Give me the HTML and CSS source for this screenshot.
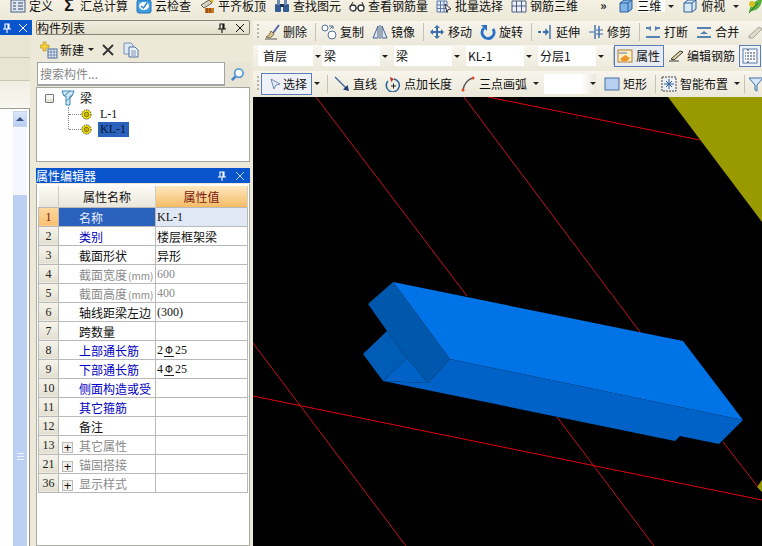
FILE: index.html
```html
<!DOCTYPE html>
<html lang="zh-CN">
<head>
<meta charset="utf-8">
<title>构件列表</title>
<link rel="stylesheet" href="styles.css">
</head>
<body>
<svg class="defs" width="0" height="0">
  <symbol id="i-define" viewBox="0 0 16 16"><rect x="1" y="2" width="14" height="12" fill="#dfe7f2" stroke="#4d5f7d"/><path d="M3 5h3M3 8h3M3 11h3M8 5h5M8 8h5M8 11h5" stroke="#33415c"/></symbol>
  <symbol id="i-check" viewBox="0 0 16 16"><rect x="1" y="2" width="14" height="13" rx="2" fill="#3f9ee0" stroke="#2370b4"/><ellipse cx="8" cy="8" rx="5" ry="4" fill="#fff"/><path d="M5 8l2.500 2L11 5" stroke="#2d86cc" stroke-width="1.500" fill="none"/></symbol>
  <symbol id="i-level" viewBox="0 0 16 16"><path d="M2 7l8-5 3 3-8 5z" fill="#d8d4c4" stroke="#66624f"/><rect x="6" y="10" width="9" height="5" fill="#c9781e"/><path d="M8 10v5M11 10v5" stroke="#7c2c10"/><path d="M12 2l2 2" stroke="#e2b100" stroke-width="2"/></symbol>
  <symbol id="i-find" viewBox="0 0 16 16"><rect x="1" y="6" width="6" height="8" rx="1" fill="#345b92"/><rect x="9" y="6" width="6" height="8" rx="1" fill="#345b92"/><rect x="3" y="2" width="3" height="5" fill="#6b8ab5"/><rect x="10" y="2" width="3" height="5" fill="#6b8ab5"/><rect x="6" y="6" width="4" height="3" fill="#1f3558"/></symbol>
  <symbol id="i-glasses" viewBox="0 0 16 16"><circle cx="4" cy="10" r="3" fill="#fff" stroke="#333" stroke-width="1.300"/><circle cx="12" cy="10" r="3" fill="#fff" stroke="#333" stroke-width="1.300"/><path d="M7 10h2M1 9l3-5M15 9l-2-5" stroke="#333" fill="none"/></symbol>
  <symbol id="i-batch" viewBox="0 0 16 16"><path d="M1 3h10v11H1zM1 7h10M1 10.500h10M4.500 3v11M8 3v11" fill="#e4ecf7" stroke="#5a77a6"/><path d="M9 6l6 5-3 .5-1 3z" fill="#fff" stroke="#333"/></symbol>
  <symbol id="i-rebar3d" viewBox="0 0 16 16"><path d="M1 3h14v11H1zM1 8h14M5.500 3v11M10.500 3v11" fill="#eef2fa" stroke="#4c5d7e"/></symbol>
  <symbol id="i-box" viewBox="0 0 16 16"><path d="M2 5l4-3h8v9l-4 3H2z" fill="#7fb4e8" stroke="#2f5f98"/><path d="M2 5h8v9M10 5l4-3" fill="none" stroke="#2f5f98"/></symbol>
  <symbol id="i-cube" viewBox="0 0 16 16"><path d="M2 5l4-3h8v9l-4 3H2z" fill="#d8e8f5" stroke="#2f5f98"/><path d="M2 5h8v9M10 5l4-3" fill="none" stroke="#2f5f98"/></symbol>
  <symbol id="i-leaf" viewBox="0 0 16 16"><path d="M2 14C3 7 8 2 15 1c0 7-5 12-11 12z" fill="#58b03c"/><circle cx="5" cy="6" r="3" fill="#d8c020"/><path d="M2 15L11 5" stroke="#1b6a24"/></symbol>
  <symbol id="i-erase" viewBox="0 0 16 16"><path d="M9 9L15 1" stroke="#5868a8" stroke-width="2"/><path d="M2 13c3-1 4-4 5-6l3 3c-1 2-4 5-8 3z" fill="#d9c48e" stroke="#7a6a44"/><path d="M1 15h12" stroke="#555"/></symbol>
  <symbol id="i-copy" viewBox="0 0 16 16"><circle cx="4" cy="4" r="3" fill="#fff" stroke="#50709c"/><circle cx="11" cy="11" r="4" fill="#fff" stroke="#50709c"/><path d="M8 2h4v3M12 2L9 5" stroke="#50709c" fill="none"/></symbol>
  <symbol id="i-mirror" viewBox="0 0 16 16"><path d="M6 2L1 14h5zM10 2l5 12h-5z" fill="#dfe8f4" stroke="#45628c"/><path d="M8 1v14" stroke="#45628c"/></symbol>
  <symbol id="i-move" viewBox="0 0 16 16"><path d="M8 1l3 3H9v3h3V5l3 3-3 3V9H9v3h2l-3 3-3-3h2V9H4v2L1 8l3-3v2h3V4H5z" fill="#3f6ea8"/></symbol>
  <symbol id="i-rotate" viewBox="0 0 16 16"><path d="M13 5a6 6 0 1 1-9-1" fill="none" stroke="#2a70c8" stroke-width="3"/><path d="M1 1h6v6z" fill="#2a70c8"/></symbol>
  <symbol id="i-extend" viewBox="0 0 16 16"><path d="M1 8h3M6 8h3" stroke="#3a6ea8" stroke-width="2"/><path d="M9 6v4l2-2zM13 1v14" fill="#3a6ea8" stroke="#3a6ea8" stroke-width="1.400"/></symbol>
  <symbol id="i-trim" viewBox="0 0 16 16"><path d="M7 1v14M11 2v12" stroke="#3a6ea8" stroke-width="1.400"/><path d="M1 8h5M8 6h7M8 10h7" stroke="#3a6ea8"/></symbol>
  <symbol id="i-break" viewBox="0 0 16 16"><path d="M1 4h5M10 4h5M1 13h14" stroke="#5682b4" stroke-width="2"/><path d="M6 7L2 4l4-2zM10 7l4-3-4-2z" fill="#5682b4"/></symbol>
  <symbol id="i-merge" viewBox="0 0 16 16"><path d="M1 4h14M1 13h14" stroke="#5682b4" stroke-width="2"/><path d="M4 10l4-3 4 3z" fill="#5682b4"/></symbol>
  <symbol id="i-faded" viewBox="0 0 16 16"><path d="M2 12l10-9 3 2-9 9H2z" fill="#ddd8c8" stroke="#a8a498"/></symbol>
  <symbol id="i-prop" viewBox="0 0 16 16"><rect x="1" y="2" width="14" height="12" fill="#fff0c8" stroke="#b27c2c"/><path d="M3 11l5-4 5 3-3 3H5z" fill="#e8962c"/><path d="M2 5h8" stroke="#5a7aa8"/></symbol>
  <symbol id="i-edit" viewBox="0 0 16 16"><path d="M1 13h10M3 11l9-8 3 1-9 8z" fill="#ddd2a6" stroke="#3d3a30"/></symbol>
  <symbol id="i-grid" viewBox="0 0 16 16"><rect x="1" y="1" width="14" height="14" fill="#f5f8fc" stroke="#5a7aa8"/><path d="M6 1v14M3 5h1M3 8h1M3 11h1M8 5h5M8 8h5M8 11h5" stroke="#33415c" stroke-dasharray="2 1"/></symbol>
  <symbol id="i-arrow" viewBox="0 0 16 16"><path d="M6 3l3 10 2-4 4-1z" fill="#e6edf8" stroke="#7388a8"/></symbol>
  <symbol id="i-line" viewBox="0 0 16 16"><path d="M1 1l12 12" stroke="#3f5f92" stroke-width="1.300"/><path d="M15 15l-6-1.500 4.500-4.500z" fill="#1f3f74"/></symbol>
  <symbol id="i-len" viewBox="0 0 16 16"><path d="M3 5a6.500 6.500 0 1 0 6-2" fill="none" stroke="#2f5f98" stroke-width="1.500"/><path d="M5 1l4 2-3 3z" fill="#c03020"/><path d="M6 10h5M8.500 7.500v5" stroke="#222"/></symbol>
  <symbol id="i-arc" viewBox="0 0 16 16"><path d="M3 14C4 8 8 3 13 2" fill="none" stroke="#555" stroke-width="1.500"/><circle cx="3" cy="14" r="1.500" fill="#e04820"/><circle cx="13" cy="2" r="1.500" fill="#e04820"/></symbol>
  <symbol id="i-rect" viewBox="0 0 16 16"><rect x="1" y="2" width="14" height="12" fill="#b8d0f0" stroke="#4870a8"/></symbol>
  <symbol id="i-smart" viewBox="0 0 16 16"><rect x="1" y="1" width="14" height="14" fill="#eef0f4" stroke="#444" stroke-dasharray="2 1"/><path d="M8 3v10M3 8h10M5 5l6 6M11 5l-6 6" stroke="#2f5f98"/></symbol>
  <symbol id="i-filter" viewBox="0 0 16 16"><path d="M1 2h14L9 9v6l-2-1V9z" fill="#d8e8f8" stroke="#3f6ea8"/></symbol>
  <symbol id="i-new" viewBox="0 0 18 18"><path d="M3 1h3v3h3v3H6v3H3V7H0V4h3z" fill="#f2d040" stroke="#b08a14" stroke-width=".6"/><rect x="8" y="8" width="9" height="9" fill="#eaf0fa" stroke="#4a6a9c"/><path d="M8 11h9M8 14h9M11 8v9M14 8v9" stroke="#4a6a9c" stroke-width=".7"/></symbol>
  <symbol id="i-paste" viewBox="0 0 16 16"><path d="M1 1h7l2 2v9H1z" fill="#dfe8f6" stroke="#7a92b8"/><path d="M6 5h6l3 3v7H6z" fill="#eef3fb" stroke="#4f6f9f"/><path d="M8 9h5M8 11h5M8 13h5" stroke="#4f6f9f" stroke-width=".7"/></symbol>
  <symbol id="i-search" viewBox="0 0 16 16"><circle cx="9.500" cy="6.500" r="4.500" fill="#fff" stroke="#5f9ed8" stroke-width="2"/><path d="M6 10l-4 4" stroke="#4a88c8" stroke-width="3"/></symbol>
  <symbol id="i-beam" viewBox="0 0 14 16"><path d="M1 1h12l-2 5H9v9H5V6H3z" fill="#cfe6f5" stroke="#3d87b8"/><path d="M3 6l6-5M5 11l6-5" stroke="#3d87b8"/></symbol>
  <symbol id="i-gear" viewBox="0 0 12 12"><circle cx="6" cy="6" r="5" fill="#f2e400" stroke="#333" stroke-dasharray="1.500 1"/><circle cx="6" cy="6" r="2.500" fill="#c9b400" stroke="#333" stroke-width=".6"/></symbol>
  <symbol id="i-pin" viewBox="0 0 10 10"><path d="M3 1h4v5H3zM1 6h8M5 6v4M6 1v5" fill="none" stroke="currentColor" stroke-width="1.100"/></symbol>
  <symbol id="i-x" viewBox="0 0 10 10"><path d="M1 1l8 8M9 1l-8 8" stroke="currentColor" fill="none"/></symbol>
</svg>

<div class="app">
  <header class="topbar">
    <span class="tb"><svg class="ic"><use href="#i-define"/></svg>定义</span>
    <span class="tb sigma-item"><span class="sigma">Σ</span>汇总计算</span>
    <span class="tb"><svg class="ic"><use href="#i-check"/></svg>云检查</span>
    <span class="tb"><svg class="ic"><use href="#i-level"/></svg>平齐板顶</span>
    <span class="tb"><svg class="ic"><use href="#i-find"/></svg>查找图元</span>
    <span class="tb"><svg class="ic"><use href="#i-glasses"/></svg>查看钢筋量</span>
    <span class="tb"><svg class="ic"><use href="#i-batch"/></svg>批量选择</span>
    <span class="tb"><svg class="ic"><use href="#i-rebar3d"/></svg>钢筋三维</span>
    <span class="more">»</span>
    <span class="tb view-field"><svg class="ic"><use href="#i-box"/></svg><span class="field3d">三维</span><i class="caret"></i></span>
    <span class="tb"><svg class="ic"><use href="#i-cube"/></svg>俯视<i class="caret"></i></span>
    <span class="tb"><svg class="ic"><use href="#i-leaf"/></svg></span>
  </header>

  <div class="body">
    <aside class="dock">
      <div class="dock-title"><svg class="ctl"><use href="#i-pin"/></svg><svg class="ctl"><use href="#i-x"/></svg></div>
      <div class="dock-row"></div>
      <div class="dock-row"></div>
      <div class="dock-row light"></div>
      <div class="dock-list">
        <div class="scrollbar">
          <div class="sb-btn"><i class="up"></i></div>
          <div class="sb-track"></div>
          <div class="sb-thumb"><span class="grip"></span></div>
        </div>
      </div>
    </aside>

    <section class="mid">
      <div class="pane-title"><span>构件列表</span><svg class="ctl"><use href="#i-pin"/></svg><svg class="ctl"><use href="#i-x"/></svg></div>
      <div class="list-tools">
        <svg class="ic18"><use href="#i-new"/></svg><span class="lt-new">新建</span><i class="caret"></i>
        <svg class="ic-x" viewBox="0 0 12 12"><path d="M1 1l10 10M11 1L1 11" stroke="#333" stroke-width="1.800"/></svg>
        <svg class="ic"><use href="#i-paste"/></svg>
      </div>
      <div class="search">
        <div class="search-input">搜索构件...</div>
        <div class="search-btn"><svg class="ic"><use href="#i-search"/></svg></div>
      </div>
      <div class="tree">
        <div class="node root"><span class="minus"></span><svg class="beam"><use href="#i-beam"/></svg><span>梁</span></div>
        <div class="children">
          <div class="node leaf"><svg class="gear"><use href="#i-gear"/></svg><span class="lbl">L-1</span></div>
          <div class="node leaf"><svg class="gear"><use href="#i-gear"/></svg><span class="lbl sel">KL-1</span></div>
        </div>
      </div>

      <div class="pane-title active"><span>属性编辑器</span><svg class="ctl"><use href="#i-pin"/></svg><svg class="ctl"><use href="#i-x"/></svg></div>
      <div class="grid-wrap">
        <table class="props">
          <colgroup><col class="c-n"><col class="c-name"><col class="c-val"></colgroup>
          <thead>
            <tr><th></th><th>属性名称</th><th class="hv">属性值</th></tr>
          </thead>
          <tbody>
            <tr class="cur"><td class="n">1</td><td class="name">名称</td><td class="val">KL-1</td></tr>
            <tr class="blue"><td class="n">2</td><td class="name">类别</td><td>楼层框架梁</td></tr>
            <tr><td class="n">3</td><td class="name">截面形状</td><td>异形</td></tr>
            <tr class="off"><td class="n">4</td><td class="name">截面宽度<small>(mm)</small></td><td class="val">600</td></tr>
            <tr class="off"><td class="n">5</td><td class="name">截面高度<small>(mm)</small></td><td class="val">400</td></tr>
            <tr><td class="n">6</td><td class="name">轴线距梁左边</td><td class="val">(300)</td></tr>
            <tr><td class="n">7</td><td class="name">跨数量</td><td></td></tr>
            <tr class="blue"><td class="n">8</td><td class="name">上部通长筋</td><td class="val">2<span class="bar">Φ</span>25</td></tr>
            <tr class="blue"><td class="n">9</td><td class="name">下部通长筋</td><td class="val">4<span class="bar">Φ</span>25</td></tr>
            <tr class="blue"><td class="n">10</td><td class="name">侧面构造或受</td><td></td></tr>
            <tr class="blue"><td class="n">11</td><td class="name">其它箍筋</td><td></td></tr>
            <tr><td class="n">12</td><td class="name">备注</td><td></td></tr>
            <tr class="off"><td class="n">13</td><td class="name"><span class="plus">+</span>其它属性</td><td></td></tr>
            <tr class="off"><td class="n">21</td><td class="name"><span class="plus">+</span>锚固搭接</td><td></td></tr>
            <tr class="off"><td class="n">36</td><td class="name"><span class="plus">+</span>显示样式</td><td></td></tr>
          </tbody>
        </table>
      </div>
    </section>

    <main class="work">
      <div class="row r1">
        <i class="handle"></i>
        <span class="tb"><svg class="ic"><use href="#i-erase"/></svg>删除</span><i class="sep"></i>
        <span class="tb"><svg class="ic"><use href="#i-copy"/></svg>复制</span>
        <span class="tb"><svg class="ic"><use href="#i-mirror"/></svg>镜像</span><i class="sep"></i>
        <span class="tb"><svg class="ic"><use href="#i-move"/></svg>移动</span>
        <span class="tb"><svg class="ic"><use href="#i-rotate"/></svg>旋转</span><i class="sep"></i>
        <span class="tb"><svg class="ic"><use href="#i-extend"/></svg>延伸</span>
        <span class="tb"><svg class="ic"><use href="#i-trim"/></svg>修剪</span><i class="sep"></i>
        <span class="tb"><svg class="ic"><use href="#i-break"/></svg>打断</span>
        <span class="tb"><svg class="ic"><use href="#i-merge"/></svg>合并</span>
        <span class="tb"><svg class="ic"><use href="#i-faded"/></svg></span>
      </div>
      <div class="row r2">
        <span class="combo w-a">首层<i class="caret"></i></span>
        <span class="combo w-b">梁<i class="caret"></i></span>
        <span class="combo w-b">梁<i class="caret"></i></span>
        <span class="combo w-c">KL-1<i class="caret"></i></span>
        <span class="combo w-d">分层1<i class="caret"></i></span>
        <i class="sep"></i>
        <span class="tb btn on"><svg class="ic"><use href="#i-prop"/></svg>属性</span>
        <span class="tb"><svg class="ic"><use href="#i-edit"/></svg>编辑钢筋</span>
        <span class="tb btn last"><svg class="ic"><use href="#i-grid"/></svg></span>
      </div>
      <div class="row r3">
        <i class="handle"></i>
        <span class="tb btn pick"><svg class="ic"><use href="#i-arrow"/></svg>选择</span><i class="caret dark"></i><i class="sep sep-a"></i>
        <span class="tb"><svg class="ic"><use href="#i-line"/></svg>直线</span>
        <span class="tb"><svg class="ic"><use href="#i-len"/></svg>点加长度</span>
        <span class="tb"><svg class="ic"><use href="#i-arc"/></svg>三点画弧<i class="caret"></i></span>
        <span class="blank"><i class="caret"></i></span>
        <span class="tb"><svg class="ic"><use href="#i-rect"/></svg>矩形</span><i class="sep"></i>
        <span class="tb"><svg class="ic"><use href="#i-smart"/></svg>智能布置<i class="caret"></i></span><i class="sep sep-z"></i>
        <span class="tb"><svg class="ic"><use href="#i-filter"/></svg></span>
      </div>
      <svg class="canvas" viewBox="253 97 509 449" preserveAspectRatio="none">
        <polygon points="668,97 762,97 762,222" fill="#999900"/>
        <polygon points="762,480 757,487 762,492" fill="#999900"/>
        <g stroke="#c8101a" fill="none">
          <path d="M316 97L467 296M557 417L654 546"/>
          <path d="M464 97L640 332M723 442L758 487"/>
          <path d="M253 343L406 546"/>
        </g>
        <g stroke="#e00010" fill="none">
          <path d="M488 97L700 140"/>
          <path d="M253 396L762 500"/>
        </g>
        <polygon points="393,282 683,341 743,420 450,359" fill="#0073e6"/>
        <polygon points="450,359 743,420 719,444 680,436 675,441 383,381 428,383" fill="#0062c6"/>
        <polygon points="393,282 450,359 428,383 407,358 387,331 368,304" fill="#0058ad"/>
        <polygon points="387,331 407,358 383,381 363,354" fill="#005cb4"/>
        <polygon points="383,381 407,358 428,383" fill="#0062c6"/>
      </svg>
    </main>
  </div>
</div>
</body>
</html>
```
FILE: styles.css
```css
* { box-sizing: border-box; }
html, body { margin: 0; padding: 0; }
body {
  width: 762px; height: 546px; overflow: hidden;
  background: #ece9d8; color: #111;
  font: 12px/16px "Noto Sans CJK SC", "Liberation Serif", sans-serif;
}
.defs { position: absolute; }
.app { width: 762px; height: 546px; display: flex; flex-direction: column; overflow: hidden; }
.ic { width: 16px; height: 16px; flex: none; }
.ic18 { width: 18px; height: 18px; flex: none; }
.tb { display: inline-flex; align-items: center; gap: 3px; white-space: nowrap; flex: none; }
.caret { display: inline-block; width: 0; height: 0; border: 3px solid transparent; border-top: 3px solid #222; border-bottom: 0; flex: none; }

/* top bar */
.topbar {
  height: 20px; flex: none; display: flex; align-items: flex-start; gap: 8px;
  padding-left: 10px; background: linear-gradient(#f4f1e4, #ece9d8);
}
.topbar .tb { height: 12px; line-height: 12px; }
.sigma { font: bold 16px/12px "Liberation Sans", sans-serif; width: 16px; margin-right: 3px; text-align: center; }
.sigma-item { gap: 0; }
.more { width: 10px; margin-left: 14px; font-weight: bold; line-height: 9px; flex: none; }
.field3d { width: 28px; background: #fff; text-align: left; }
.topbar .tb:nth-child(11) .caret { margin-left: 5px; }

.body { flex: 1; display: flex; min-height: 0; }

/* left dock */
.dock { width: 36px; flex: none; display: flex; flex-direction: column; }
.dock-title {
  height: 15px; width: 32px; flex: none; background: #0a55cc; color: #fff;
  display: flex; align-items: center; justify-content: space-between; padding: 0 4px 0 2px;
}
.ctl { width: 10px; height: 10px; flex: none; }
.dock-row { height: 23px; width: 30px; flex: none; background: #e9e5d3; border-bottom: 1px solid #c8c5b4; }
.dock-row.light { height: 27px; background: linear-gradient(#f1efe4, #f8f7f0); border-bottom: 0; }
.dock-list { flex: 1; width: 30px; background: #fff; border-top: 1px solid #9fa09a; border-right: 1px solid #90918b; padding-left: 13px; }
.scrollbar { width: 14px; height: 100%; display: flex; flex-direction: column; padding-top: 2px; }
.sb-btn { height: 16px; flex: none; background: linear-gradient(#dbe6fb, #b7cdf3); border: 1px solid #c6d5ee; display: flex; align-items: center; justify-content: center; }
.up { width: 0; height: 0; border: 4px solid transparent; border-bottom: 4px solid #39507c; border-top: 0; }
.sb-track { height: 68px; flex: none; background: #f4f7fd; }
.sb-thumb { flex: 1; background: #bcd0f4; display: flex; align-items: flex-start; justify-content: center; padding-top: 258px; }
.grip { width: 7px; height: 7px; border-top: 1px solid #eef3fc; border-bottom: 1px solid #eef3fc; background: linear-gradient(#bcd0f4 40%, #eef3fc 40%, #eef3fc 60%, #bcd0f4 60%); }

/* middle */
.mid { width: 217px; flex: none; padding-right: 3px; display: flex; flex-direction: column; }
.pane-title {
  height: 15px; flex: none; display: flex; align-items: center; padding: 0 4px 0 0; gap: 8px;
  background: linear-gradient(#f1eee0, #e3dfca); border: 1px solid #85847a; border-radius: 2px;
}
.pane-title span { flex: 1; }
.pane-title.active { background: #0a55cc; color: #fff; border: 0; border-radius: 0; margin-top: 6px; padding-right: 5px; }
.pane-title.active .ctl + .ctl { color: #b9cff4; }
.list-tools { height: 27px; flex: none; display: flex; align-items: center; padding: 2px 0 0 4px; }
.lt-new { margin-left: 2px; margin-right: 4px; }
.ic-x { width: 12px; height: 12px; margin: 0 9px 0 8px; flex: none; }
.search { height: 25px; flex: none; display: flex; }
.search-input { width: 188px; margin-left: 1px; height: 24px; background: #fff; border: 1px solid #a0a5a5; border-bottom-width: 2px; color: #888; padding: 3px 2px; }
.search-btn { flex: 1; display: flex; align-items: center; justify-content: center; background: #e8e5d6; }
.search-btn .ic { width: 15px; height: 15px; }
.tree { height: 75px; flex: none; background: #fff; border: 1px solid #a5a6a0; padding: 1px 0 0 8px; }
.node { display: flex; align-items: center; height: 15px; }
.root { gap: 5px; height: 18px; }
.minus { width: 9px; height: 9px; border: 1px solid #777; border-radius: 1px; background: linear-gradient(#f4f4f0 50%, #333 50%, #333 58%, #e4e4dc 58%); }
.beam { width: 14px; height: 16px; margin-left: 2px; }
.children { margin-left: 23px; border-left: 1px dotted #888; height: 22px; }
.leaf { gap: 6px; }
.leaf::before { content: ""; width: 12px; border-top: 1px dotted #888; margin-right: -6px; flex: none; }
.gear { width: 11px; height: 11px; flex: none; }
.lbl { font: 12px/15px "Liberation Serif", serif; padding: 0 2px; }
.sel { background: #2a62be; color: #0b1730; min-width: 31px; }

/* property grid */
.grid-wrap { flex: 1; background: #fff; border: 1px solid #a9aaa4; border-top: 0; padding: 2px 2px 0 1px; margin-top: 1px; }
.props { border-collapse: collapse; table-layout: fixed; width: 209px; font-size: 12px; }
.c-n { width: 20px; } .c-name { width: 97px; } .c-val { width: 92px; }
.props th { height: 21px; padding: 2px 0 0; font-weight: normal; text-align: center; background: linear-gradient(#fbfaf5, #e9e6da); border-right: 1px solid #d0cec2; }
.props th.hv { background: linear-gradient(#fde8bf, #f5bb66); color: #7a1a10; }
.props td { height: 19px; padding: 2px 0 0 1px; border: 1px solid #b9b9b9; white-space: nowrap; overflow: hidden; line-height: 15px; }
.props td.n { padding: 2px 0 0; text-align: center; background: linear-gradient(#f6f4ea, #e3e0d2); font: 12px/15px "Liberation Serif", serif; color: #222; }
.props td.name { padding-left: 20px; }
.props td.val { font-family: "Liberation Serif", serif; }
.props small { font-size: 10px; margin-left: 1px; }
.blue .name { color: #0000c4; }
.off td { color: #8a8a8a; }
.off td.n { color: #222; }
.cur .n { background: linear-gradient(#fcd9a0, #f8c070) !important; color: #7a1a10 !important; }
.cur .name { background: #2a62be; color: #e8eefc; }
.cur .val { background: #e0e8f5; }
.bar { font-family: "DejaVu Sans", sans-serif; font-size: 10px; padding: 0 1px; border-bottom: 1px solid #222; line-height: 10px; display: inline-block; margin: 0 1px; }
.props td.name:has(.plus) { padding-left: 3px; }
.plus { display: inline-block; width: 11px; height: 11px; margin-right: 6px; border: 1px solid #bbb; background: #f2f0e8; color: #111; font: 13px/9px "Liberation Sans", sans-serif; text-align: center; vertical-align: -1px; }

/* work area */
.work { flex: 1; min-width: 0; display: flex; flex-direction: column; padding-top: 1px; overflow: hidden; }
.row { flex: none; display: flex; align-items: center; gap: 8px; padding-left: 4px; background: linear-gradient(#f7f5ec, #ebe8da); white-space: nowrap; overflow: hidden; }
.r1 { height: 24px; padding-bottom: 2px; }
.r2 { height: 24px; padding-left: 5px; padding-bottom: 2px; gap: 0; background: linear-gradient(#f8f6ee, #ece9dc); }
.r3 { height: 26px; padding-bottom: 1px; margin-top: 2px; }
.handle { width: 2px; height: 16px; flex: none; background: repeating-linear-gradient(#b8b5a6 0 2px, transparent 2px 4px); margin-right: -3px; }
.sep { width: 1px; height: 18px; background: #c5c2b2; flex: none; margin-right: -3px; }
.combo { display: inline-flex; align-items: center; justify-content: space-between; background: #fff; padding-left: 5px; flex: none; height: 20px; }
.combo .caret { position: relative; left: 8px; }
.w-a { width: 55px; margin-right: 9px; }
.w-b { width: 58px; margin-right: 14px; padding-left: 2px; }
.w-c { width: 58px; margin-right: 14px; padding-left: 2px; }
.w-d { width: 58px; margin-right: 17px; padding-left: 2px; }
.btn { border: 1px solid #5a7fb5; background: #eef2f8; height: 22px; padding: 0 2px; }
.btn.on { margin: 0 4px 0 3px; width: 50px; background: #e8ecf2; }
.btn.last { margin-left: 4px; }
.pick { width: 51px; gap: 2px; padding: 0 0 0 3px; margin-left: -3px; }
.dark { margin: 0 -1px 0 -6px; }
.sep-a { margin-right: -2px; }
.sep-z { margin: 0 -5px 0 -4px; }
.r3 .tb .caret { margin-left: 3px; }
.blank { flex: none; width: 52px; height: 20px; margin-left: -3px; background: linear-gradient(90deg, #fff 70%, #ece9dc); display: inline-flex; align-items: center; justify-content: flex-end; }
.canvas { flex: 1; display: block; width: 509px; min-height: 0; background: #000; }
```
